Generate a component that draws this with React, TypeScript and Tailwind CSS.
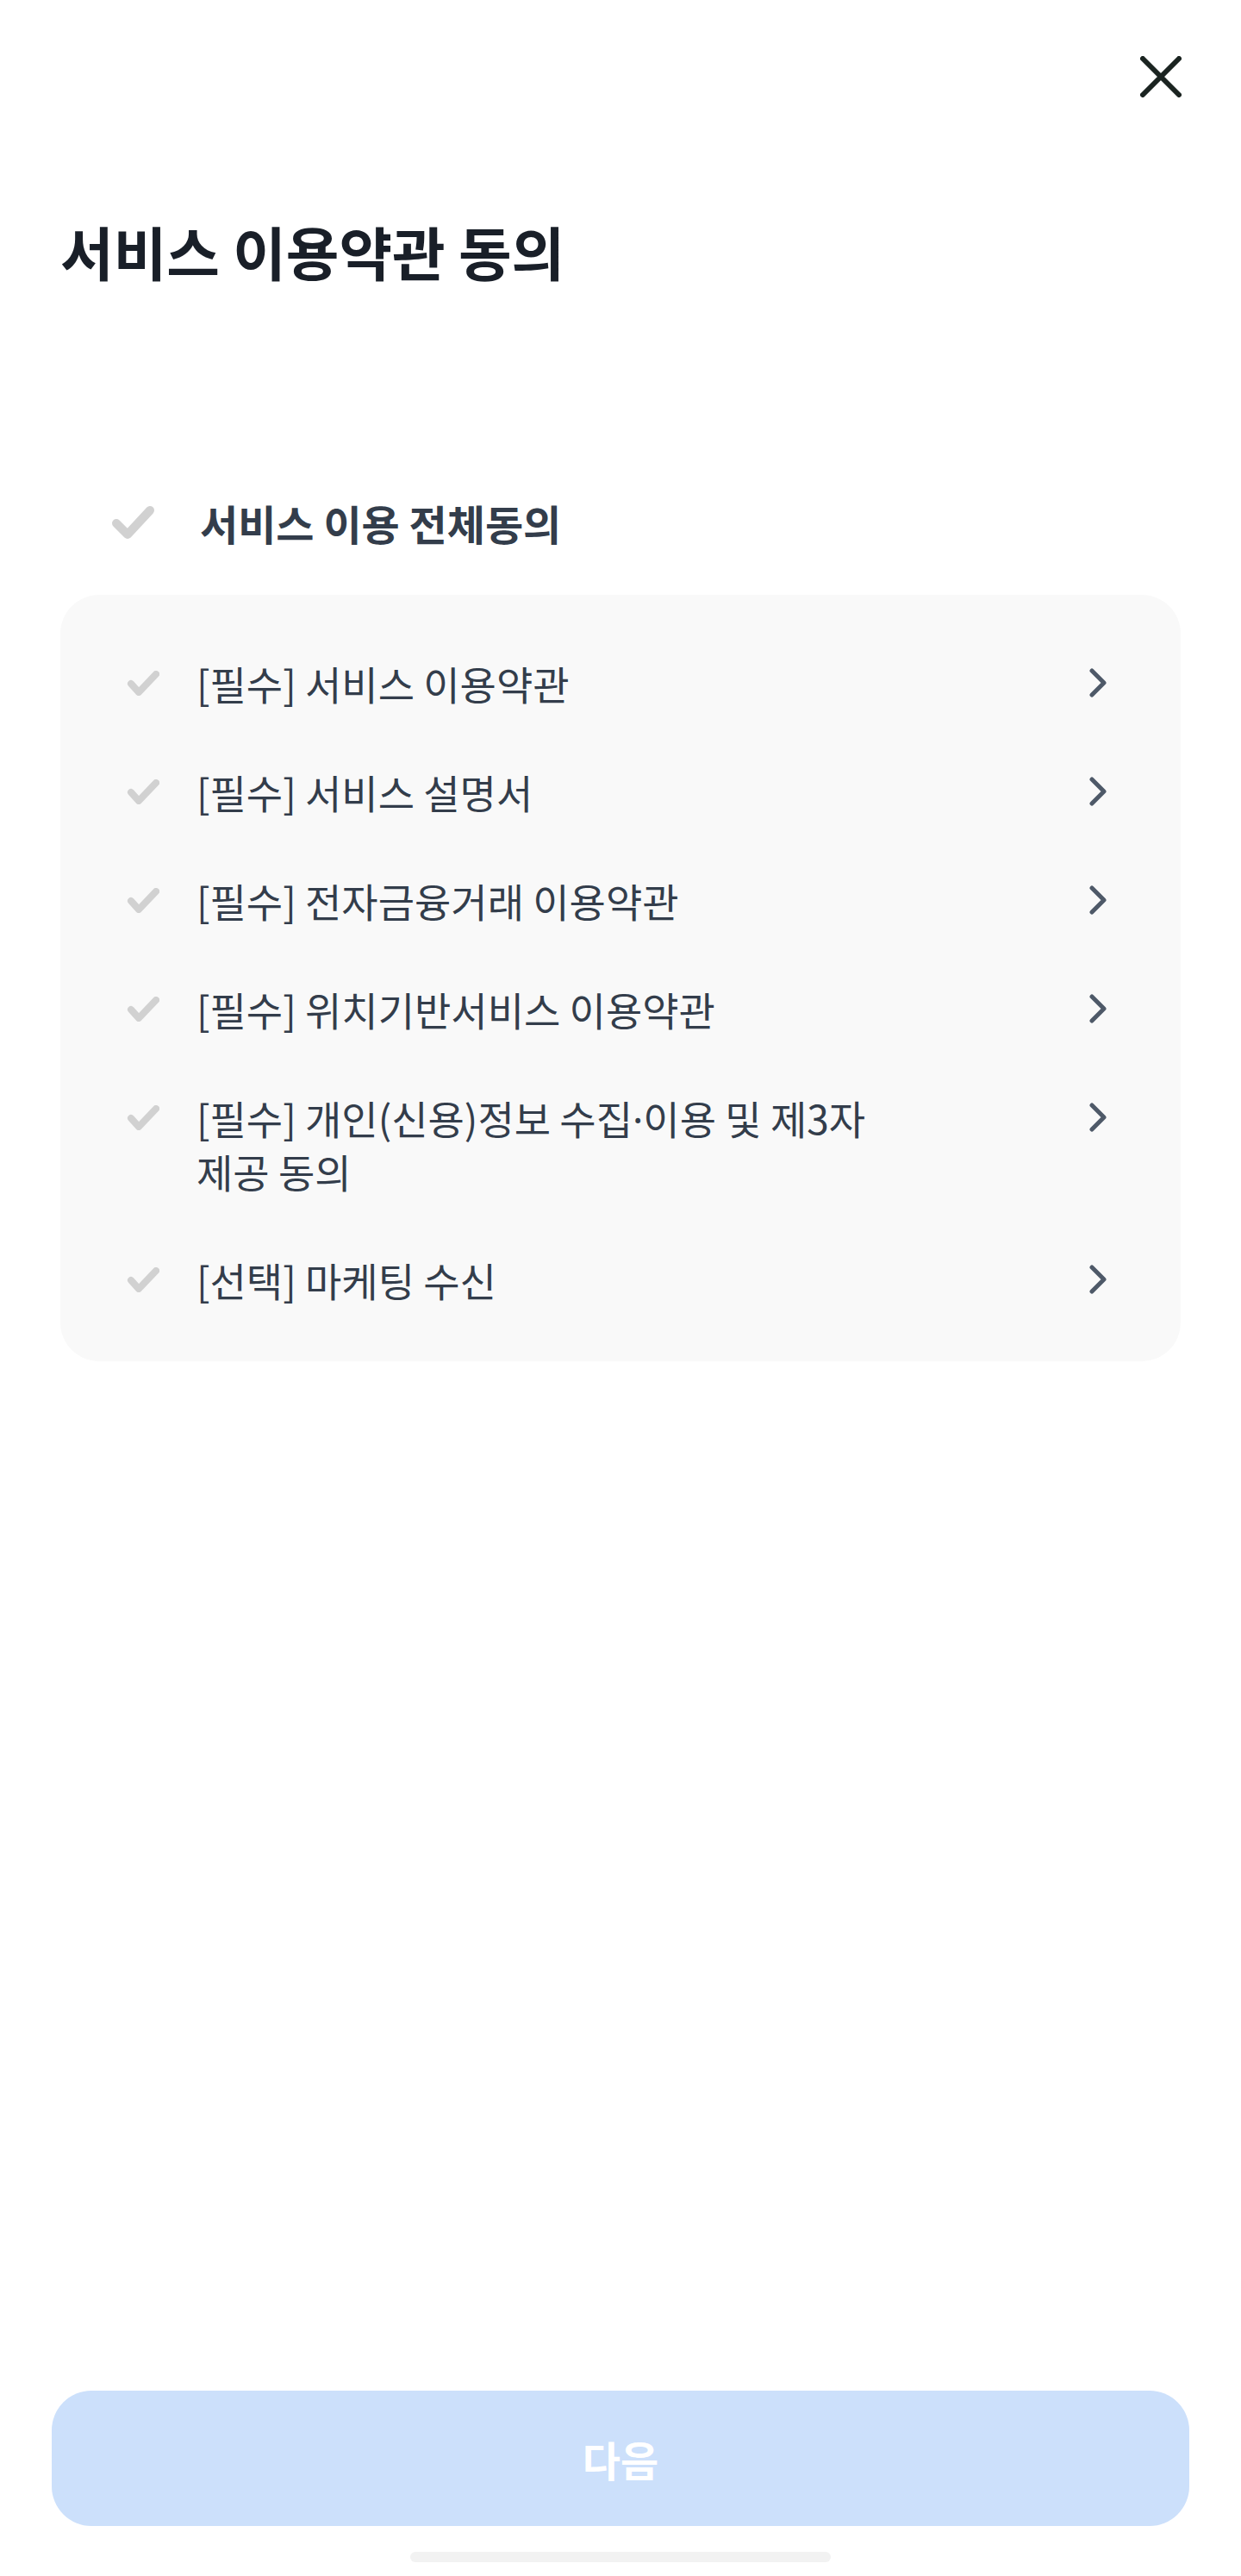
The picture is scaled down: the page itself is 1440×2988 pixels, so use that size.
import React from 'react'

interface Term {
  label: React.ReactNode[]
}

const Dot = () => <span style={{ fontFamily: '"Noto Sans", sans-serif' }}>·</span>

const terms: Term[] = [
  { label: ['[필수] 서비스 이용약관'] },
  { label: ['[필수] 서비스 설명서'] },
  { label: ['[필수] 전자금융거래 이용약관'] },
  { label: ['[필수] 위치기반서비스 이용약관'] },
  {
    label: [
      <>
        [필수] 개인(신용)정보 수집<Dot />이용 및 제3자
      </>,
      '제공 동의',
    ],
  },
  { label: ['[선택] 마케팅 수신'] },
]

const CheckIcon = ({ big = false }: { big?: boolean }) =>
  big ? (
    <svg width="50" height="38" viewBox="0 0 50 38" fill="none">
      <path d="M6 20 L19 33 L45 5" stroke="#d1d1d1" strokeWidth="10" strokeLinecap="round" strokeLinejoin="round" />
    </svg>
  ) : (
    <svg width="38" height="29" viewBox="0 0 38 29" fill="none">
      <path d="M5 15 L14 25 L34 4" stroke="#d1d1d1" strokeWidth="8" strokeLinecap="round" strokeLinejoin="round" />
    </svg>
  )

const Chevron = () => (
  <svg width="20" height="34" viewBox="0 0 20 34" fill="none">
    <path d="M3 3 L17 17 L3 31" stroke="#4e5968" strokeWidth="5" strokeLinecap="round" strokeLinejoin="round" />
  </svg>
)

export default function App() {
  return (
    <div
      className="flex min-h-[2988px] w-[1440px] flex-col bg-white"
      style={{ fontFamily: '"Noto Sans CJK KR", "Noto Sans", sans-serif' }}
    >
      {/* header */}
      <div className="flex justify-end pr-[69px] pt-[65px]">
        <svg width="48" height="48" viewBox="0 0 48 48" fill="none">
          <path d="M3 3 L45 45 M45 3 L3 45" stroke="#1b2421" strokeWidth="6" strokeLinecap="round" />
        </svg>
      </div>

      <div className="px-[70px]">
        <h1 className="mt-[138px] text-[67px] font-bold leading-[80px] text-[#191f28]">
          서비스 이용약관 동의
        </h1>

        {/* all agree */}
        <div className="mt-[245px] flex h-[60px] items-center">
          <div className="ml-[59px] flex w-[103px] items-center">
            <CheckIcon big />
          </div>
          <span className="text-[48px] font-bold leading-[60px] text-[#333d4b]">
            서비스 이용 전체동의
          </span>
        </div>

        {/* terms */}
        <div className="mt-[54px] rounded-[45px] bg-[#f9f9f9] pb-[32px] pt-[39px]">
          {terms.map((t, i) => (
            <div key={i} className="flex items-start py-[33px] pl-[77px] pr-[86px]">
              <div className="flex h-[60px] w-[81px] shrink-0 items-center">
                <CheckIcon />
              </div>
              <div className="flex-1 text-[46px] leading-[60px] text-[#333d4b]">
                {t.label.map((l, j) => (
                  <div key={j}>{l}</div>
                ))}
              </div>
              <div className="flex h-[60px] items-center">
                <Chevron />
              </div>
            </div>
          ))}
        </div>
      </div>

      <div className="flex-1" />

      {/* bottom */}
      <div className="px-[60px]">
        <button className="flex h-[157px] w-full items-center justify-center rounded-[46px] bg-[#cce0fb] text-[48px] font-semibold text-white">
          다음
        </button>
      </div>
      <div className="mb-[16px] mt-[30px] flex justify-center">
        <div className="h-[12px] w-[488px] rounded-full bg-[#f2f2f2]" />
      </div>
    </div>
  )
}
